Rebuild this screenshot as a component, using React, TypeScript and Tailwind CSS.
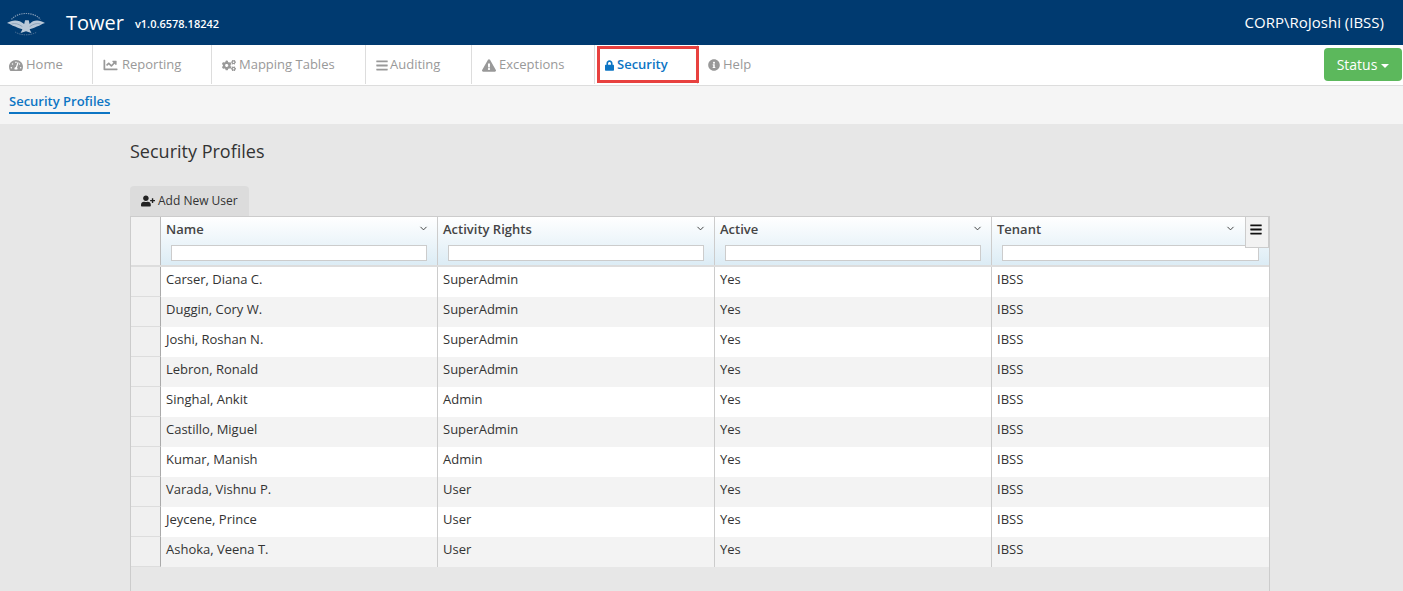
import { FaTachometerAlt, FaChartLine, FaCogs, FaBars, FaExclamationTriangle, FaLock, FaInfoCircle, FaUserPlus } from 'react-icons/fa';
import { ChevronDown } from 'lucide-react';

const navItems = [
  { icon: <FaTachometerAlt className="w-[14px] h-[13px]" />, label: 'Home', width: 'w-[93px]', gap: 'gap-[3px]', pad: 'pl-[9px]' },
  { icon: <FaChartLine className="w-[15px] h-[14px]" />, label: 'Reporting', width: 'w-[119px]', gap: 'gap-[4px]', pad: 'pl-[10px]' },
  { icon: <FaCogs className="w-[14px] h-[13px]" />, label: 'Mapping Tables', width: 'w-[154px]', gap: 'gap-[3px]', pad: 'pl-[10px]' },
  { icon: <FaBars className="w-[12px] h-[13px]" />, label: 'Auditing', width: 'w-[106px]', gap: 'gap-[2px]', pad: 'pl-[10px]' },
  { icon: <FaExclamationTriangle className="w-[14px] h-[13px]" />, label: 'Exceptions', width: 'w-[123px]', gap: 'gap-[3px]', pad: 'pl-[10px]' },
];

const users = [
  ['Carser, Diana C.', 'SuperAdmin'],
  ['Duggin, Cory W.', 'SuperAdmin'],
  ['Joshi, Roshan N.', 'SuperAdmin'],
  ['Lebron, Ronald', 'SuperAdmin'],
  ['Singhal, Ankit', 'Admin'],
  ['Castillo, Miguel', 'SuperAdmin'],
  ['Kumar, Manish', 'Admin'],
  ['Varada, Vishnu P.', 'User'],
  ['Jeycene, Prince', 'User'],
  ['Ashoka, Veena T.', 'User'],
];

const columns = ['Name', 'Activity Rights', 'Active', 'Tenant'];

const Eagle = () => (
  <svg width="38" height="26" viewBox="0 0 42 28" className="shrink-0">
    <path d="M5 10 A 18 12 0 0 1 37 10" fill="none" stroke="#7f98b3" strokeWidth="1.3" strokeDasharray="1.5 1" />
    <path d="M9 24 A 18 12 0 0 0 33 24" fill="none" stroke="#5f7d9e" strokeWidth="1" strokeDasharray="1.5 1" />
    <path d="M0 14 C6 10 13 10 19 15 L20 11 L24 11 L25 15 C29 10 36 10 42 14 C38 15 37 17 33 18 C30 20 27 20 25 21 L27 25 L21 23 L15 25 L17 21 C15 20 12 20 9 18 C5 17 4 15 0 14 Z" fill="#b9c8d8" />
    <path d="M5 15 C9 14 13 15 17 18 M37 15 C33 14 29 15 25 18" fill="none" stroke="#7f97b2" strokeWidth="0.8" />
  </svg>
);

export default function App() {
  return (
    <div className="h-[591px] overflow-hidden flex flex-col bg-[#e7e7e7] font-['Open_Sans',sans-serif] text-[13px] text-[#333]">
      <header className="h-[45px] shrink-0 bg-[#003a70] text-white flex items-center pl-[7px] pr-[19px]">
        <Eagle />
        <span className="ml-[21px] text-[20px] leading-none">Tower</span>
        <span className="ml-[11px] mt-[3px] text-[11px] font-semibold">v1.0.6578.18242</span>
        <span className="ml-auto text-[15px]">CORP\RoJoshi (IBSS)</span>
      </header>

      <nav className="h-[41px] shrink-0 bg-white border-b border-[#ddd] flex items-stretch relative pb-[1px] text-[#999]">
        {navItems.map((item) => (
          <a key={item.label} className={`${item.width} ${item.gap} ${item.pad} border-r border-[#ddd] flex items-center pt-[1px]`}>
            {item.icon}
            <span>{item.label}</span>
          </a>
        ))}
        <a className="w-[103px] flex items-center gap-[3px] pl-[10px] pt-[1px] text-[#0d75c4] font-semibold border-r border-[#ddd]">
          <FaLock className="w-[9px] h-[11px]" />
          <span>Security</span>
        </a>
        <a className="flex items-center gap-[3px] pl-[10px] pt-[1px]">
          <FaInfoCircle className="w-[12px] h-[12px]" />
          <span>Help</span>
        </a>
        <div className="absolute left-[597px] top-[1px] w-[102px] h-[37px] border-[3px] border-[#e8413f]" />
        <button className="ml-auto mr-[1px] mt-[3px] h-[33px] w-[78px] rounded bg-[#5cb85c] text-white text-[14px] flex items-center justify-center gap-[4px]">
          Status
          <span className="w-0 h-0 mt-[2px] border-x-[4px] border-x-transparent border-t-[4px] border-t-white" />
        </button>
      </nav>

      <div className="h-[38px] shrink-0 bg-[#f5f5f5] flex items-start pl-[9px] pt-[7px]">
        <span className="text-[#0d75c4] font-semibold text-[13px] leading-[17px] pb-[2px] h-[21px] border-b-2 border-[#0d75c4]">Security Profiles</span>
      </div>

      <main className="pl-[130px] pr-[133px] flex-1 flex flex-col min-h-0">
        <h1 className="mt-[15px] h-[47px] text-[18px] leading-[25px] text-[#333]">Security Profiles</h1>
        <button className="w-[119px] h-[30px] rounded-t bg-[#dcdcdc] flex items-center gap-[3px] pl-[11px] text-[12px] text-[#333]">
          <FaUserPlus className="w-[14px] h-[12px] text-[#222]" />
          Add New User
        </button>

        <div className="relative flex-1 border-x border-t border-[#ccc]">
          <div className="flex h-[50px] border-b-2 border-[#ddd]">
            <div className="w-[30px] shrink-0 bg-[#f2f2f2] border-r border-[#bbb]" />
            {columns.map((col, i) => (
              <div key={col} className={`${i === 3 ? 'w-[277px]' : 'w-[277px] border-r border-[#ccc]'} px-[5px] bg-gradient-to-b from-white to-[#dcecf5]`}>
                <div className={`${i === 3 ? 'pr-[28px]' : 'pr-[3px]'} flex items-center justify-between h-[28px] pb-[3px] font-semibold text-[#444] text-[13px]`}>
                  <span>{col}</span>
                  <ChevronDown className="w-[11px] h-[11px] mb-[2px] text-[#333]" />
                </div>
                <input className={`${i === 3 ? 'w-[257px]' : 'w-[256px]'} block ml-[5px] h-[16px] bg-white border border-[#ccc]`} />
              </div>
            ))}
          </div>

          {users.map(([name, rights], i) => (
            <div key={name} className={`flex h-[30px] ${i % 2 === 1 ? 'bg-[#f3f3f3]' : 'bg-white'}`}>
              <div className="w-[30px] shrink-0 bg-[#f0f0f0] border-r border-[#aaa] border-b border-b-[#ddd]" />
              <div className="w-[277px] border-r border-[#ccc] pl-[5px] pt-[3px]">{name}</div>
              <div className="w-[277px] border-r border-[#ccc] pl-[5px] pt-[3px]">{rights}</div>
              <div className="w-[277px] border-r border-[#ccc] pl-[5px] pt-[3px]">Yes</div>
              <div className="w-[277px] pl-[5px] pt-[3px]">IBSS</div>
            </div>
          ))}

          <button className="absolute right-0 top-0 w-[24px] h-[31px] bg-[#f2f2f2] border-x border-b border-[#ccc] flex items-center justify-center pr-[3px] pb-[6px]">
            <FaBars className="w-[12px] h-[13px] text-[#111]" />
          </button>
        </div>
      </main>
    </div>
  );
}
